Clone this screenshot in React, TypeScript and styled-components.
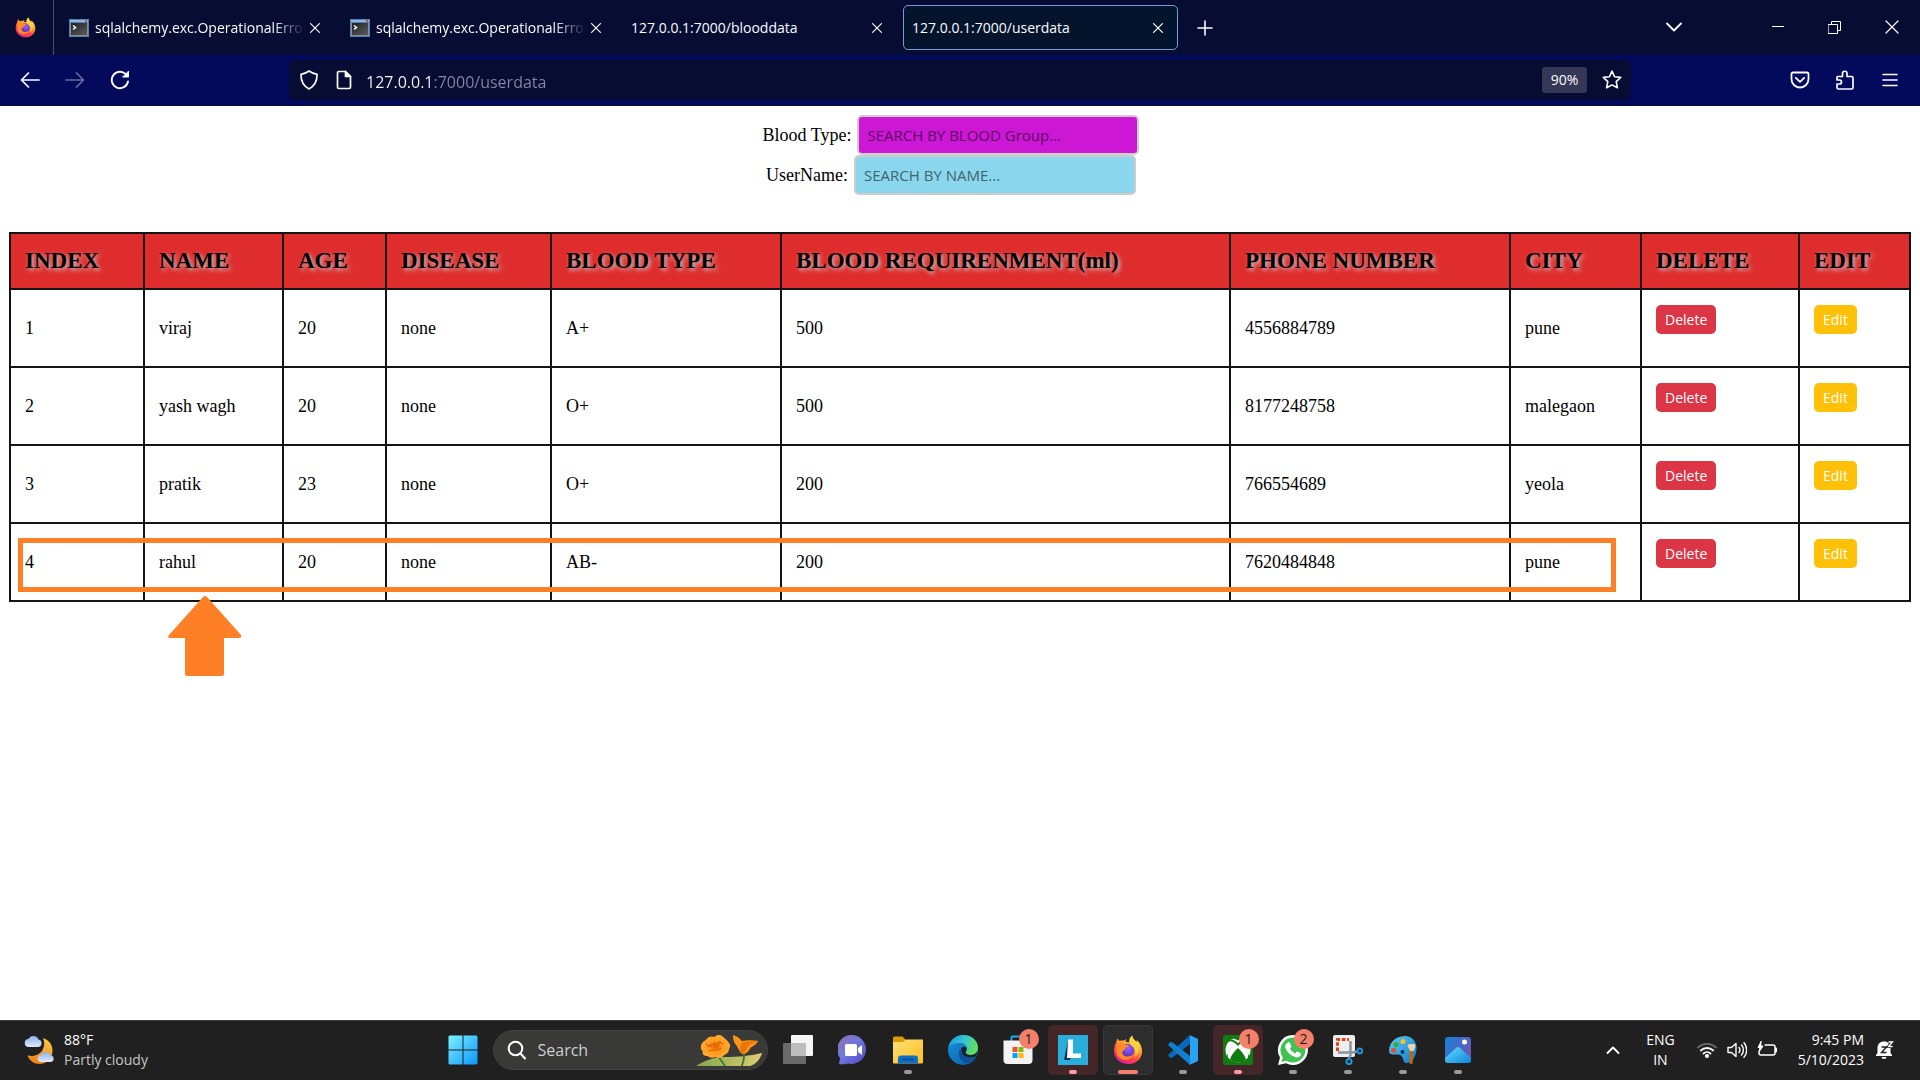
import React from 'react';
import styled, { createGlobalStyle, css } from 'styled-components';

const ui = `'Open Sans', 'Noto Sans', sans-serif`;
const serif = `'Liberation Serif', 'Times New Roman', serif`;

const GlobalStyle = createGlobalStyle`
  *, *::before, *::after { box-sizing: border-box; }
  body { margin: 0; background: #ffffff; }
  button, input { font: inherit; color: inherit; margin: 0; }
`;

const Screen = styled.div`
  display: flex;
  flex-direction: column;
  min-height: 100vh;
  font-family: ${ui};
`;

/* ---------- browser chrome ---------- */

const TabStrip = styled.header`
  display: flex;
  height: 55px;
  background: #070c33;
  color: #fbfbfe;
`;

const BrandCell = styled.div`
  display: flex;
  align-items: center;
  width: 54px;
  padding-left: 15px;
  margin-right: 3px;
  border-right: 1px solid #4c4f6c;
`;

const TabBox = styled.div<{ $active?: boolean }>`
  display: flex;
  align-items: center;
  width: 275px;
  height: 45px;
  margin: 5px 3px;
  padding: 0 9px 0 8px;
  border: 1px solid transparent;
  border-radius: 5px;
  ${(p) =>
    p.$active &&
    css`
      background: #05142d;
      border-color: #7299db;
    `}
`;

const TabTitle = styled.button<{ $fade?: boolean }>`
  display: flex;
  align-items: center;
  gap: 6px;
  flex: 1;
  min-width: 0;
  height: 100%;
  padding: 0;
  border: 0;
  background: none;
  text-align: left;
  font-size: 14px;
  line-height: 20px;
  white-space: nowrap;
  overflow: hidden;
  ${(p) =>
    p.$fade &&
    css`
      mask-image: linear-gradient(to left, transparent, #000 32px);
    `}
  svg { flex: none; }
`;

const IconButton = styled.button<{ $w?: number; $h?: number; $dim?: boolean }>`
  display: flex;
  flex: none;
  align-items: center;
  justify-content: center;
  width: ${(p) => p.$w ?? 40}px;
  height: ${(p) => p.$h ?? 40}px;
  padding: 0;
  border: 0;
  background: none;
  opacity: ${(p) => (p.$dim ? 0.4 : 1)};
`;

const StripEnd = styled.div`
  display: flex;
  gap: 51px;
  margin-left: auto;
`;

const WindowButtons = styled.div`
  display: flex;
`;

const NavBar = styled.nav`
  display: flex;
  align-items: center;
  height: 51px;
  padding: 0 10px;
  background: #030a5b;
  border-bottom: 1px solid #070c33;
  color: #fbfbfe;
`;

const NavGroup = styled.div`
  display: flex;
  gap: 5px;
`;

const UrlBar = styled.div`
  display: flex;
  align-items: center;
  gap: 5px;
  flex: 1;
  height: 40px;
  margin: 0 149px;
  padding: 0 4px 0 5px;
  border-radius: 5px;
  background: #070c33;
`;

const UrlInput = styled.input`
  flex: 1;
  min-width: 0;
  padding: 3px 2px 0;
  border: 0;
  outline: 0;
  color: #fbfbfe;
  font-size: 16px;
  line-height: 24px;
  background: linear-gradient(to right, #fbfbfe 68px, #8587a8 68px);
  background-clip: text;
  -webkit-text-fill-color: transparent;
`;

const ZoomButton = styled.button`
  width: 45px;
  height: 26px;
  margin-right: 5px;
  padding: 0;
  border: 0;
  border-radius: 3px;
  background: #343756;
  font-size: 14px;
  line-height: 26px;
`;

/* ---------- page ---------- */

const Page = styled.main`
  flex: 1;
  padding: 9px;
  color: #000;
  font-family: ${serif};
  font-size: 18px;
  line-height: 20px;
`;

const Filters = styled.form`
  display: flex;
  flex-direction: column;
  align-items: center;
  padding-right: 18px;
`;

const FilterRow = styled.div`
  display: flex;
  align-items: center;
  gap: 6px;
`;

const FilterInput = styled.input<{ $bg: string; $hint: string }>`
  width: 282px;
  height: 40px;
  padding: 0 8px;
  border: 2px solid #cccccc;
  border-radius: 5px;
  background: ${(p) => p.$bg};
  font-family: ${ui};
  font-size: 15px;
  &::placeholder { color: ${(p) => p.$hint}; opacity: 1; }
`;

const TableArea = styled.section`
  position: relative;
  margin-top: 37px;
`;

const Table = styled.table`
  width: 100%;
  table-layout: fixed;
  border-collapse: collapse;
`;

const Head = styled.th`
  height: 56px;
  padding: 0 14px;
  border: 2px solid #141414;
  background: #df2d2d;
  font-size: 23px;
  line-height: 26px;
  text-align: left;
  white-space: nowrap;
  text-shadow: 2px 2px 4px #c8c8c8;
`;

const Cell = styled.td<{ $top?: boolean }>`
  height: 78px;
  padding: ${(p) => (p.$top ? '15px 14px 0' : '0 14px')};
  border: 2px solid #141414;
  vertical-align: ${(p) => (p.$top ? 'top' : 'middle')};
`;

const ActionButton = styled.button<{ $bg: string }>`
  display: block;
  height: 29px;
  padding: 0 9px;
  border: 0;
  border-radius: 5px;
  background: ${(p) => p.$bg};
  color: #fff;
  font-family: ${ui};
  font-size: 14px;
  line-height: 29px;
`;

const RowHighlight = styled.div`
  position: absolute;
  top: 306px;
  left: 9px;
  right: 295px;
  height: 54px;
  border: 5px solid #ff7f27;
  pointer-events: none;
`;

const RowPointer = styled.svg`
  position: absolute;
  top: 364px;
  left: 159px;
`;

/* ---------- taskbar ---------- */

const Taskbar = styled.footer`
  display: grid;
  grid-template-columns: 1fr auto 1fr;
  align-items: center;
  height: 60px;
  box-shadow: inset 0 1px #3a3d3c;
  background: #202020;
  color: #fff;
  font-size: 14px;
  line-height: 20px;
`;

const Weather = styled.button`
  display: flex;
  align-items: center;
  gap: 8px;
  justify-self: start;
  padding: 0 0 0 24px;
  border: 0;
  background: none;
  text-align: left;
`;

const Lines = styled.span<{ $align?: string }>`
  display: flex;
  flex-direction: column;
  text-align: ${(p) => p.$align ?? 'left'};
`;

const Muted = styled.span`
  color: #c6c6c6;
`;

const Apps = styled.div`
  display: flex;
  align-items: center;
  gap: 5px;
`;

const SearchBox = styled.label`
  display: flex;
  align-items: center;
  gap: 11px;
  width: 275px;
  height: 40px;
  padding: 0 1px 0 13px;
  border: 1px solid #414141;
  border-radius: 20px;
  background: #393938;
`;

const SearchInput = styled.input`
  flex: 1;
  min-width: 0;
  padding: 0;
  border: 0;
  outline: 0;
  background: none;
  font-size: 16px;
  &::placeholder { color: #cfcfcf; opacity: 1; }
`;

const AppButton = styled.button<{ $tone?: 'alert' | 'active' }>`
  position: relative;
  display: flex;
  align-items: center;
  justify-content: center;
  width: 50px;
  height: 50px;
  padding: 0;
  border: 1px solid transparent;
  border-radius: 5px;
  background: none;
  ${(p) => p.$tone === 'alert' && css`background: #442628;`}
  ${(p) => p.$tone === 'active' && css`background: #2d2d2d; border-color: #383838;`}
`;

const Running = styled.span<{ $color: string; $wide?: boolean }>`
  position: absolute;
  bottom: 0;
  left: 50%;
  width: ${(p) => (p.$wide ? 20 : 8)}px;
  height: 4px;
  margin-left: ${(p) => (p.$wide ? -10 : -4)}px;
  border-radius: 2px;
  background: ${(p) => p.$color};
`;

const Badge = styled.span`
  position: absolute;
  top: 3px;
  right: 3px;
  width: 20px;
  height: 20px;
  border-radius: 10px;
  background: #f5806a;
  color: #1c1c1c;
  font-size: 14px;
  line-height: 20px;
  text-align: center;
`;

const Tray = styled.div`
  display: flex;
  align-items: center;
  justify-self: end;
  padding-right: 25px;
`;

const TrayButton = styled.button<{ $gap?: number }>`
  display: flex;
  align-items: center;
  gap: 10px;
  margin-left: ${(p) => p.$gap ?? 0}px;
  padding: 0;
  border: 0;
  background: none;
`;

/* ---------- drawings ---------- */

const Firefox = ({ size, id }: { size: number; id: string }) => (
  <svg width={size} height={size} viewBox="0 0 32 32" aria-hidden="true">
    <defs>
      <linearGradient id={`${id}a`} x1="0.8" y1="0.05" x2="0.3" y2="1">
        <stop offset="0" stopColor="#fff44f" />
        <stop offset="0.35" stopColor="#ffa52a" />
        <stop offset="0.65" stopColor="#ff4a45" />
        <stop offset="1" stopColor="#e8158f" />
      </linearGradient>
      <radialGradient id={`${id}b`} cx="0.55" cy="0.35" r="0.7">
        <stop offset="0" stopColor="#a35bff" />
        <stop offset="1" stopColor="#4a35b5" />
      </radialGradient>
    </defs>
    <path
      fill={`url(#${id}a)`}
      d="M20.5 0.8c.4 3 2.6 4.7 4.4 6.600c.5-.5.400-1.300.300-2 3.600 3 5.800 7.400 5.800 12.100C31 25.300 24.500 31 16.200 31 8 31 1 25.300 1 16.800c0-3.800 1.200-6.900 2.600-9.400.200-1.600.600-2.800 1.200-3.800.500 1.100 1.400 2 2.500 2.800 1.200-.500 2.600-.5 3.900-.300 1.200-1 2.500-1.600 3.800-1.700-1 .8-1.700 1.800-1.800 2.600 1.400.6 3 .7 4.200.700-.400-2.800.700-5.300 3.100-6.900z"
    />
    <circle cx="15.800" cy="16.200" r="6.800" fill={`url(#${id}b)`} />
    <path
      fill="#ff8b25"
      d="M5 9.500c2.600-1 5.500-.7 7.400 1 1.800-.4 3.500 0 4.600.7-.3 1.700-2.500 1.900-3.700 2.700-.7.600-.4 1.600-1 2-1.200.5-2.400 1-2.400 2.800 0 2.700 2.500 4.500 5.500 4.500 2.600 0 3.700-1.300 5.700-1.300-1.300 3-4.400 4.800-7.800 4.800C7.500 26.700 3.500 22 3.500 16c0-2.400.5-4.700 1.500-6.500z"
    />
    <path
      fill="#ffd23d"
      d="M20.500.8c.4 3 2.600 4.700 4.400 6.600 2 2.200 3 4.700 2.700 8-.3 4.300-2.700 7-5.500 8.500 1.800-2.500 2.200-6 .8-9-1.200-2.500-3.900-3.300-5.200-6-.5-3.300.400-6.400 2.800-8.100z"
      opacity="0.85"
    />
  </svg>
);

const Terminal = ({ id }: { id: string }) => (
  <svg width="20" height="20" viewBox="0 0 20 20" aria-hidden="true">
    <defs>
      <linearGradient id={id} x1="0" y1="0" x2="1" y2="1">
        <stop offset="0" stopColor="#222" />
        <stop offset="1" stopColor="#5c5c5c" />
      </linearGradient>
    </defs>
    <rect x="0" y="1" width="20" height="18" fill="#4d7fb8" />
    <rect x="1" y="2" width="18" height="2" fill="#8fb7e2" />
    <rect x="16" y="2" width="2" height="2" fill="#d14a3c" />
    <rect x="1" y="5" width="18" height="13" fill="#8d8d89" />
    <rect x="2" y="5" width="16" height="12" fill={`url(#${id})`} />
    <path d="M4 7.500l2.500 2-2.500 2" stroke="#fff" strokeWidth="1.500" fill="none" />
  </svg>
);

const Stroke = ({
  d,
  w = 20,
  h = 20,
  sw = 1.6,
  children,
}: {
  d?: string;
  w?: number;
  h?: number;
  sw?: number;
  children?: React.ReactNode;
}) => (
  <svg
    width={w}
    height={h}
    viewBox={`0 0 ${w} ${h}`}
    fill="none"
    stroke="currentColor"
    strokeWidth={sw}
    strokeLinecap="round"
    strokeLinejoin="round"
    aria-hidden="true"
  >
    {d && <path d={d} />}
    {children}
  </svg>
);

const WeatherIcon = () => (
  <svg width="32" height="30" viewBox="0 0 32 30" aria-hidden="true">
    <defs>
      <linearGradient id="moon" x1="0.7" y1="0" x2="0.3" y2="1">
        <stop offset="0" stopColor="#f7c843" />
        <stop offset="1" stopColor="#ef7d1a" />
      </linearGradient>
      <linearGradient id="cloud" x1="0" y1="0" x2="0" y2="1">
        <stop offset="0" stopColor="#8fb0ee" />
        <stop offset="1" stopColor="#dfe9fb" />
      </linearGradient>
    </defs>
    <path fill="url(#moon)" d="M19 3c6 2 10 7 9.500 13.500C28 23.500 22.500 29 15.500 29 10 29 5.500 26 3.500 20.500c6 1.500 12-.5 15-5.500 2.200-4 2.200-8 .5-12z" />
    <path fill="url(#cloud)" d="M5 12a4 4 0 0 1-.5-8A5.500 5.500 0 0 1 14.500 4.500 3.800 3.800 0 0 1 14 12z" />
    <path fill="url(#cloud)" d="M17 27a3.500 3.500 0 0 1 .3-7 5 5 0 0 1 9.200.3A3.400 3.400 0 0 1 27 27z" />
  </svg>
);

const WindowsLogo = () => (
  <svg width="30" height="30" viewBox="0 0 30 30" aria-hidden="true">
    <defs>
      <linearGradient id="win" x1="0" y1="0" x2="1" y2="1">
        <stop offset="0" stopColor="#7df3ff" />
        <stop offset="1" stopColor="#0a94fb" />
      </linearGradient>
    </defs>
    <path fill="url(#win)" d="M1.500 .5H14.500V14.500H.5V1.500zM15.500 .5H28.500L29.500 1.500V14.500H15.500zM.5 15.500H14.500V29.500H1.500L.5 28.500zM15.500 15.500H29.500V28.500L28.500 29.500H15.500z" />
  </svg>
);

const Poppies = () => (
  <svg width="70" height="32" viewBox="0 0 72 32" preserveAspectRatio="none" aria-hidden="true">
    <defs>
      <linearGradient id="leaf" x1="0" y1="0" x2="1" y2="0">
        <stop offset="0" stopColor="#7fa84c" />
        <stop offset="1" stopColor="#dfcd74" />
      </linearGradient>
      <radialGradient id="petal">
        <stop offset="0" stopColor="#e86500" />
        <stop offset="0.500" stopColor="#ff9a1f" />
        <stop offset="1" stopColor="#ffab2e" />
      </radialGradient>
    </defs>
    <path fill="url(#leaf)" d="M0 32c8-5 17-9 30-9 14 0 24-1 38-4-2 6-6 11-12 13z" />
    <path d="M21 20c3 4 6 8 9 12M49 17c1 6 0 11-2 15" stroke="#3f7a34" strokeWidth="2" fill="none" />
    <path fill="url(#petal)" d="M5 12c1-4 4-5 6-7 2-3 6-3 8-2 3-3 7-2 9 0 2 2 4 3 6 6 2 2 1 4 0 6 0 3-2 5-5 6-2 3-6 4-9 2-3 1-6 1-8-1-4 0-6-2-5-5-2-1-2-3-2-5z" />
    <path d="M12 13c3-3 5-4 8-2 3-4 6-3 8-1M13 17c4-2 8 1 13-3M19 8l1 5M25 7l-3 6M10 10l6 3" stroke="#db6400" strokeWidth="1.200" fill="none" />
    <path fill="#ff9416" d="M38 1c4 1 7 3 9 6 5-1 11-1 17 0-2 4-6 5-8 7-2 3-4 6-8 6-3-1-4-5-6-8-3-3-4-7-4-11z" />
    <path fill="#d96300" d="M45 18c0-4 1-8 3-10 6 0 11-1 16-1-5 2-9 3-11 6-1 3-3 6-5 7z" opacity="0.600" />
  </svg>
);

const TaskView = () => (
  <svg width="30" height="30" viewBox="0 0 30 30" aria-hidden="true">
    <rect x="0" y="8" width="23" height="21" rx="1" fill="#6a6a6a" />
    <rect x="8" y="0" width="22" height="21" rx="1" fill="#f5f5f5" />
    <rect x="8" y="8" width="15" height="13" fill="#bdbdbd" />
  </svg>
);

const Chat = () => (
  <svg width="30" height="30" viewBox="0 0 30 30" aria-hidden="true">
    <defs>
      <linearGradient id="chat" x1="0" y1="0" x2="1" y2="1">
        <stop offset="0" stopColor="#9a6aa8" />
        <stop offset="0.450" stopColor="#6b7be0" />
        <stop offset="1" stopColor="#5546bd" />
      </linearGradient>
    </defs>
    <path fill="url(#chat)" d="M15 0a14.500 14.500 0 1 1-5 28.500c-3 1-6 1-9 .5l1-6A14.500 14.500 0 0 1 15 0z" />
    <rect x="7" y="9" width="12" height="12" rx="1.500" fill="#fff" />
    <path fill="#fff" d="M20 13l4-3v10l-4-3z" />
  </svg>
);

const Explorer = () => (
  <svg width="30" height="30" viewBox="0 0 30 30" aria-hidden="true">
    <defs>
      <linearGradient id="fold" x1="0" y1="0" x2="1" y2="1">
        <stop offset="0" stopColor="#ffe07a" />
        <stop offset="1" stopColor="#ffbe1f" />
      </linearGradient>
    </defs>
    <path fill="#dc9a08" d="M0 3a1.500 1.500 0 0 1 1.500-1.500h8L13 5v6H0z" />
    <path fill="url(#fold)" d="M0 7h10l3-2.500h17V27.500a1 1 0 0 1-1 1H1a1 1 0 0 1-1-1z" />
    <path fill="#0f6fc4" d="M5 28.500v-5a3 3 0 0 1 3-3h14a3 3 0 0 1 3 3v5z" />
    <path d="M9 24.500h12" stroke="#0a4a8c" strokeWidth="1.500" />
  </svg>
);

const Edge = () => (
  <svg width="30" height="30" viewBox="0 0 30 30" aria-hidden="true">
    <defs>
      <linearGradient id="edgeTop" x1="0" y1="0.300" x2="1" y2="0.600">
        <stop offset="0" stopColor="#1f9fe0" />
        <stop offset="0.500" stopColor="#33c6cf" />
        <stop offset="1" stopColor="#6be04c" />
      </linearGradient>
      <linearGradient id="edgeLow" x1="0" y1="0" x2="1" y2="1">
        <stop offset="0" stopColor="#1593e0" />
        <stop offset="1" stopColor="#0c59a4" />
      </linearGradient>
    </defs>
    <circle cx="15" cy="15" r="15" fill="url(#edgeLow)" />
    <path fill="url(#edgeTop)" d="M.5 12C2 5 8 0 15.500 0 24 0 30 6 30 12.500c0 5-3.500 7.500-7.500 7.500-3.500 0-5-1.500-5-2.500 0-.8 1.500-1.500 1.500-4C19 10 15.500 8 11.500 8 6.500 8 2.500 9.500.5 12z" />
    <path fill="#0f4f9c" d="M12 13.500c-2.500 5-1 12 6 14.500 4.500-.5 8-3 10-6-6 3-13 1-16-8.500z" />
    <path fill="#202020" d="M13.500 13c1-1.500 3.500-1.500 5-.500.500 2-.5 3.500-1 4.500 0 2 3 3.500 6 3 2.500-.3 4.500-1.500 6-3.500-.5 2-1 3.500-1.800 5-4.200 2-9.700 1-12.200-1.500-2-2-2.500-4.500-2-7z" />
  </svg>
);

const Store = () => (
  <svg width="30" height="30" viewBox="0 0 30 30" aria-hidden="true">
    <path d="M8.500 7V2.500a1 1 0 0 1 1-1h11a1 1 0 0 1 1 1V7" stroke="#20a8e8" strokeWidth="2" fill="none" />
    <path fill="#f3f3f3" d="M.5 5.500h29V25a4 4 0 0 1-4 4h-21a4 4 0 0 1-4-4z" />
    <rect x="9.500" y="12" width="5" height="5" fill="#f25022" />
    <rect x="15.500" y="12" width="5" height="5" fill="#7fba00" />
    <rect x="9.500" y="18" width="5" height="5" fill="#00a4ef" />
    <rect x="15.500" y="18" width="5" height="5" fill="#ffb900" />
  </svg>
);

const LApp = () => (
  <svg width="30" height="30" viewBox="0 0 30 30" aria-hidden="true">
    <rect width="30" height="30" fill="#27aedb" />
    <path fill="#0d2f5e" d="M10 5L6 25h6l2-6z" />
    <path fill="#fff" d="M10 4.500h5v14h8V23H9z" />
  </svg>
);

const VSCode = () => (
  <svg width="30" height="30" viewBox="0 0 30 30" aria-hidden="true">
    <path fill="#0a6ab8" d="M22 0v9L4.500 22.500 2.500 23 .5 21v-1.500z" />
    <path fill="#0f7fd0" d="M22 30v-9L4.500 7.500 2.500 7 .5 9v1.500z" />
    <path fill="#2aa4f2" d="M21.500 0L30 4v22l-8.500 4c.400-.500.500-1 .5-2V2c0-1-.1-1.500-.5-2z" />
  </svg>
);

const Xbox = () => (
  <svg width="30" height="30" viewBox="0 0 30 30" aria-hidden="true">
    <rect width="30" height="30" rx="2" fill="#107c10" />
    <circle cx="15" cy="15" r="12.500" fill="#fff" />
    <path
      d="M5.500 5.500C9 4.500 12.500 7 15 9.500 17.500 7 21 4.500 24.500 5.500"
      stroke="#107c10"
      strokeWidth="2"
      fill="none"
    />
    <path fill="#107c10" d="M9.500 3.500c2 0 4 1 5.500 2 1.500-1 3.500-2 5.500-2V1h-11z" />
    <path fill="#107c10" d="M10.500 9.500C7 13 4 18.500 5 23.500L3.500 22C6 16 8 12 10.500 9.500z" />
    <path fill="#107c10" d="M19.500 9.500C23 13 26 18.500 25 23.500l1.500-1.500C24 16 22 12 19.500 9.500z" />
    <path fill="#107c10" d="M15 13c3.500 3 7 7.500 8 11.500-2 2-5 3.300-8 3.300s-6-1.300-8-3.300c1-4 4.500-8.500 8-11.500z" />
  </svg>
);

const WhatsApp = () => (
  <svg width="32" height="32" viewBox="0 0 32 32" aria-hidden="true">
    <path fill="#fff" d="M16 1a15 15 0 1 1-7 28.300L1 31l2-7.500A15 15 0 0 1 16 1z" />
    <path fill="#41c352" d="M16 3.500a12.500 12.500 0 1 1-6.500 23.200L4.500 28l1.300-4.800A12.500 12.500 0 0 1 16 3.500z" />
    <path fill="#fff" d="M11 8.500c.8-.3 1.600-.2 2 .6l1.300 3c.2.500 0 1-1.300 2.500 1.300 2.400 3 3.800 5.200 4.800 1.300-1.600 1.700-2 2.300-1.800l3 1.500c.600.300.600 2-.2 3-1 1.200-3 1.700-4.600 1.200-5-1.600-8-4.500-10-8.500-1-2.200-.500-5 2.300-6.300z" />
  </svg>
);

const Snip = () => (
  <svg width="30" height="30" viewBox="0 0 30 30" aria-hidden="true">
    <rect x="0" y="0" width="22" height="22" rx="2" fill="#eeeeee" />
    <path d="M4.500 16V4.500H16" stroke="#d8431c" strokeWidth="3" strokeDasharray="3.500 1.800" fill="none" />
    <path d="M17.500 6v14l-2 4M5 17.500h15l4-1" stroke="#8c959d" strokeWidth="2.500" fill="none" />
    <circle cx="16" cy="26.500" r="2.600" stroke="#1c94dc" strokeWidth="2" fill="none" />
    <circle cx="26.800" cy="16" r="2.400" stroke="#1c94dc" strokeWidth="2" fill="none" />
  </svg>
);

const Paint = () => (
  <svg width="30" height="30" viewBox="0 0 30 30" aria-hidden="true">
    <defs>
      <linearGradient id="pal" x1="0" y1="0" x2="1" y2="1">
        <stop offset="0" stopColor="#58cdf5" />
        <stop offset="1" stopColor="#1479cc" />
      </linearGradient>
    </defs>
    <path fill="url(#pal)" d="M17 1c7 0 12 6 11.500 13C28 22 24 28 18.500 28c-4 0-2.500-5-5.500-7.500C9.500 18 5 21 2 18.500-1 15 3 1 17 1z" />
    <circle cx="5.500" cy="15.500" r="2.500" fill="#e2502d" />
    <circle cx="8" cy="9.500" r="2.500" fill="#3aa635" />
    <circle cx="15" cy="6.500" r="2.500" fill="#ffc21a" />
    <circle cx="14.500" cy="17" r="2" fill="#12355e" />
    <path fill="#efd3ac" d="M19.500 11c0-1.500 1-2 5-2s3 2 2 5l-.8 2h-3.500z" />
    <path fill="#b76a1c" d="M21 16h4l-.3 12c-.2 1.500-2.800 1.500-3 0z" />
  </svg>
);

const Photos = () => (
  <svg width="28" height="28" viewBox="0 0 28 28" aria-hidden="true">
    <defs>
      <linearGradient id="sky" x1="0" y1="0" x2="1" y2="0.600">
        <stop offset="0" stopColor="#1580d8" />
        <stop offset="1" stopColor="#6c58b4" />
      </linearGradient>
      <linearGradient id="hill" x1="0" y1="0" x2="1" y2="1">
        <stop offset="0" stopColor="#5fdcff" />
        <stop offset="1" stopColor="#1184dc" />
      </linearGradient>
    </defs>
    <rect x="1" y="1" width="26" height="26" rx="3" fill="url(#sky)" />
    <path fill="url(#hill)" d="M1 22l11-10c1.300-1.200 2.700-1.200 4 0l11 10v2a3 3 0 0 1-3 3H4a3 3 0 0 1-3-3z" />
    <circle cx="20.500" cy="6" r="2.500" fill="#fff" />
  </svg>
);

/* ---------- data ---------- */

const columns: [string, number][] = [
  ['INDEX', 134],
  ['NAME', 139],
  ['AGE', 103],
  ['DISEASE', 165],
  ['BLOOD TYPE', 230],
  ['BLOOD REQUIRENMENT(ml)', 449],
  ['PHONE NUMBER', 280],
  ['CITY', 131],
  ['DELETE', 158],
  ['EDIT', 111],
];

const Column = styled.col<{ $share: number }>`
  width: ${(p) => p.$share / 19}%;
`;

const donors = [
  ['1', 'viraj', '20', 'none', 'A+', '500', '4556884789', 'pune'],
  ['2', 'yash wagh', '20', 'none', 'O+', '500', '8177248758', 'malegaon'],
  ['3', 'pratik', '23', 'none', 'O+', '200', '766554689', 'yeola'],
  ['4', 'rahul', '20', 'none', 'AB-', '200', '7620484848', 'pune'],
];

const tabs = [
  { title: 'sqlalchemy.exc.OperationalError', icon: true },
  { title: 'sqlalchemy.exc.OperationalError', icon: true },
  { title: '127.0.0.1:7000/blooddata' },
  { title: '127.0.0.1:7000/userdata', active: true },
];

type App = {
  name: string;
  icon: React.ReactNode;
  tone?: 'alert' | 'active';
  bar?: string;
  badge?: number;
};

const grey = '#9a9a9a';
const pink = '#ff99a4';
const apps: App[] = [
  { name: 'Task view', icon: <TaskView /> },
  { name: 'Chat', icon: <Chat /> },
  { name: 'File Explorer', icon: <Explorer />, bar: grey },
  { name: 'Edge', icon: <Edge /> },
  { name: 'Store', icon: <Store />, badge: 1 },
  { name: 'L', icon: <LApp />, tone: 'alert', bar: pink },
  { name: 'Firefox', icon: <Firefox size={30} id="ffb" />, tone: 'active', bar: '#f5806a' },
  { name: 'VS Code', icon: <VSCode />, bar: grey },
  { name: 'Xbox', icon: <Xbox />, tone: 'alert', bar: pink, badge: 1 },
  { name: 'WhatsApp', icon: <WhatsApp />, bar: grey, badge: 2 },
  { name: 'Snipping Tool', icon: <Snip />, bar: grey },
  { name: 'Paint', icon: <Paint />, bar: grey },
  { name: 'Photos', icon: <Photos />, bar: grey },
];

export default function App() {
  return (
    <Screen>
      <GlobalStyle />
      <TabStrip>
        <BrandCell>
          <Firefox size={21} id="ffa" />
        </BrandCell>
        {tabs.map((t, i) => (
          <TabBox key={i} $active={t.active}>
            <TabTitle type="button" $fade={t.icon}>
              {t.icon && <Terminal id={`term${i}`} />}
              {t.title}
            </TabTitle>
            <IconButton $w={20} $h={20} aria-label="Close tab">
              <Stroke w={10} h={10} sw={1.2} d="M.6 .6l8.800 8.800M9.400 .6L.6 9.400" />
            </IconButton>
          </TabBox>
        ))}
        <IconButton $w={48} $h={55} aria-label="New tab">
          <Stroke w={16} h={16} sw={1.6} d="M8 1v14M1 8h14" />
        </IconButton>
        <StripEnd>
          <IconButton $w={48} $h={53} aria-label="List all tabs">
            <Stroke w={16} h={10} sw={1.8} d="M1 1.500l7 7 7-7" />
          </IconButton>
          <WindowButtons>
            <IconButton $w={57} $h={53} aria-label="Minimize">
              <Stroke w={12} h={1} sw={1} d="M0 .5h12" />
            </IconButton>
            <IconButton $w={57} $h={54} aria-label="Restore">
              <Stroke w={13} h={13} sw={1}>
                <path d="M.5 3.500h9v9h-9zM3.500 3.500v-3h9v9h-3" />
              </Stroke>
            </IconButton>
            <IconButton $w={57} $h={54} aria-label="Close window">
              <Stroke w={14} h={14} sw={1.2} d="M1 1l12 12M13 1L1 13" />
            </IconButton>
          </WindowButtons>
        </StripEnd>
      </TabStrip>

      <NavBar>
        <NavGroup>
          <IconButton aria-label="Back">
            <Stroke sw={1.7} d="M19 10H1.500M8.500 3L1.500 10l7 7" />
          </IconButton>
          <IconButton $dim aria-label="Forward">
            <Stroke sw={1.7} d="M1 10h17.500M11.500 3l7 7-7 7" />
          </IconButton>
          <IconButton aria-label="Reload">
            <Stroke sw={1.9}>
              <path d="M18 11.500A8.200 8.200 0 1 1 15.800 4.200" />
              <path d="M18.500 1.500v5.500h-5.500z" fill="currentColor" strokeWidth="1" />
            </Stroke>
          </IconButton>
        </NavGroup>
        <UrlBar>
          <IconButton $w={30} aria-label="Tracking protection">
            <Stroke sw={1.7} d="M10 1c2.500 1.800 5 2.800 8 3.300.2 6.500-2 11.500-8 14.700C4 15.800 1.800 10.800 2 4.300 5 3.800 7.500 2.800 10 1z" />
          </IconButton>
          <IconButton $w={30} aria-label="Site information">
            <Stroke w={16} sw={1.7}>
              <path d="M3 1.500h6.500l5 5V17a1.500 1.500 0 0 1-1.500 1.500H3A1.500 1.500 0 0 1 1.500 17V3A1.500 1.500 0 0 1 3 1.500z" />
              <path d="M9.500 1.500v5h5z" fill="currentColor" />
            </Stroke>
          </IconButton>
          <UrlInput aria-label="Address" defaultValue="127.0.0.1:7000/userdata" />
          <ZoomButton type="button">90%</ZoomButton>
          <IconButton $w={30} aria-label="Bookmark">
            <Stroke sw={1.6} d="M10 1.200l2.500 5.500 6.200.7-4.500 4.200 1.200 6.200L10 14.900l-5.400 2.900 1.200-6.200L1.300 7.400l6.200-.7z" />
          </IconButton>
        </UrlBar>
        <NavGroup>
          <IconButton aria-label="Pocket">
            <Stroke sw={1.8} d="M3 2.500h14a1.500 1.500 0 0 1 1.500 1.500v5a8.500 8.500 0 0 1-17 0V4A1.500 1.500 0 0 1 3 2.500zM5.800 7.800l4.200 4 4.200-4" />
          </IconButton>
          <IconButton aria-label="Extensions">
            <Stroke sw={1.7} d="M2.500 6.500h5V3.500a2.200 2.200 0 0 1 4.500 0v3h4.500a1.500 1.500 0 0 1 1.500 1.500v9.500a1.500 1.500 0 0 1-1.500 1.500H3.500A1.500 1.500 0 0 1 2 17.500V14h2.500a2 2 0 0 0 0-4H2V7z" />
          </IconButton>
          <IconButton aria-label="Menu">
            <Stroke w={16} sw={1.6} d="M1 4.500h14M1 10h14M1 15.500h14" />
          </IconButton>
        </NavGroup>
      </NavBar>

      <Page>
        <Filters>
          <FilterRow>
            <label htmlFor="blood">Blood Type:</label>
            <FilterInput id="blood" $bg="#cc17d5" $hint="#5d0b61" placeholder="SEARCH BY BLOOD Group..." />
          </FilterRow>
          <FilterRow>
            <label htmlFor="user">UserName:</label>
            <FilterInput id="user" $bg="#8ad6ec" $hint="#41646f" placeholder="SEARCH BY NAME..." />
          </FilterRow>
        </Filters>
        <TableArea>
          <Table>
            <colgroup>
              {columns.map(([name, share]) => (
                <Column key={name} $share={share} />
              ))}
            </colgroup>
            <thead>
              <tr>
                {columns.map(([name]) => (
                  <Head key={name} scope="col">{name}</Head>
                ))}
              </tr>
            </thead>
            <tbody>
              {donors.map((row) => (
                <tr key={row[0]}>
                  {row.map((value, i) => (
                    <Cell key={i}>{value}</Cell>
                  ))}
                  <Cell $top>
                    <ActionButton type="button" $bg="#dc3545">Delete</ActionButton>
                  </Cell>
                  <Cell $top>
                    <ActionButton type="button" $bg="#ffc107">Edit</ActionButton>
                  </Cell>
                </tr>
              ))}
            </tbody>
          </Table>
          <RowHighlight />
          <RowPointer width="74" height="80" viewBox="0 0 74 80" aria-hidden="true">
            <path fill="#ff7f27" d="M35 1q2-2 4 0l34 38q1 3-2 3H56v36q0 2-2 2H19q-2 0-2-2V42H2q-3 0-1-3z" />
          </RowPointer>
        </TableArea>
      </Page>

      <Taskbar>
        <Weather type="button">
          <WeatherIcon />
          <Lines>
            <span>88°F</span>
            <Muted>Partly cloudy</Muted>
          </Lines>
        </Weather>
        <Apps>
          <AppButton aria-label="Start"><WindowsLogo /></AppButton>
          <SearchBox>
            <Stroke sw={2}>
              <circle cx="8.500" cy="8.500" r="6.800" />
              <path d="M13.500 13.500l4.500 5" />
            </Stroke>
            <SearchInput type="text" aria-label="Search" placeholder="Search" />
            <Poppies />
          </SearchBox>
          {apps.map((a) => (
            <AppButton key={a.name} $tone={a.tone} aria-label={a.name}>
              {a.icon}
              {a.badge && <Badge>{a.badge}</Badge>}
              {a.bar && <Running $color={a.bar} $wide={a.tone === 'active'} />}
            </AppButton>
          ))}
        </Apps>
        <Tray>
          <TrayButton aria-label="Show hidden icons">
            <Stroke w={14} h={10} sw={1.8} d="M1.500 8L7 2.500 12.500 8" />
          </TrayButton>
          <TrayButton $gap={26}>
            <Lines $align="center">
              <span>ENG</span>
              <span>IN</span>
            </Lines>
          </TrayButton>
          <TrayButton $gap={22} aria-label="Network, volume and battery">
            <Stroke w={20} h={18} sw={1.8}>
              <path d="M1 6.500a13 13 0 0 1 18 0" opacity="0.350" />
              <path d="M3.800 9.500a9 9 0 0 1 12.400 0M6.500 12.500a5 5 0 0 1 7 0" />
              <circle cx="10" cy="15" r="1.200" fill="currentColor" />
            </Stroke>
            <Stroke w={20} h={18} sw={1.400}>
              <path d="M1 6.500h3.500L9 2.500v13L4.500 11.500H1zM12 6.500a4 4 0 0 1 0 5M14.500 4a7.500 7.500 0 0 1 0 10M17 1.800a11 11 0 0 1 0 14.400" />
            </Stroke>
            <Stroke w={20} h={18} sw={1.500}>
              <path d="M8 4h8a2 2 0 0 1 2 2v6a2 2 0 0 1-2 2H4a2 2 0 0 1-2-2v-1" />
              <path d="M19 7.500v3" strokeWidth="2" />
              <path d="M4 .5L1 6.500h2L2 11l4-6H4z" fill="currentColor" strokeWidth="1" />
            </Stroke>
          </TrayButton>
          <TrayButton $gap={21}>
            <Lines $align="right">
              <span>9:45 PM</span>
              <span>5/10/2023</span>
            </Lines>
          </TrayButton>
          <TrayButton $gap={11} aria-label="Notifications">
            <svg width="20" height="20" viewBox="0 0 20 20" aria-hidden="true">
              <path fill="#fff" d="M9 1.500c4 0 6.500 2.500 6.500 6.500v5l1.500 2v1H1v-1l1.500-2V8c0-4 2.500-6.500 6.500-6.500zM6.500 17h5a2.500 2 0 0 1-5 0z" />
              <path d="M13.500 2h4l-4 4.500h4" stroke="#202020" strokeWidth="3" fill="none" />
              <path d="M13.500 2h4l-4 4.500h4" stroke="#fff" strokeWidth="1.300" fill="none" />
              <path d="M6.500 7h5l-5 5.500h5" stroke="#202020" strokeWidth="1.400" fill="none" />
            </svg>
          </TrayButton>
        </Tray>
      </Taskbar>
    </Screen>
  );
}
